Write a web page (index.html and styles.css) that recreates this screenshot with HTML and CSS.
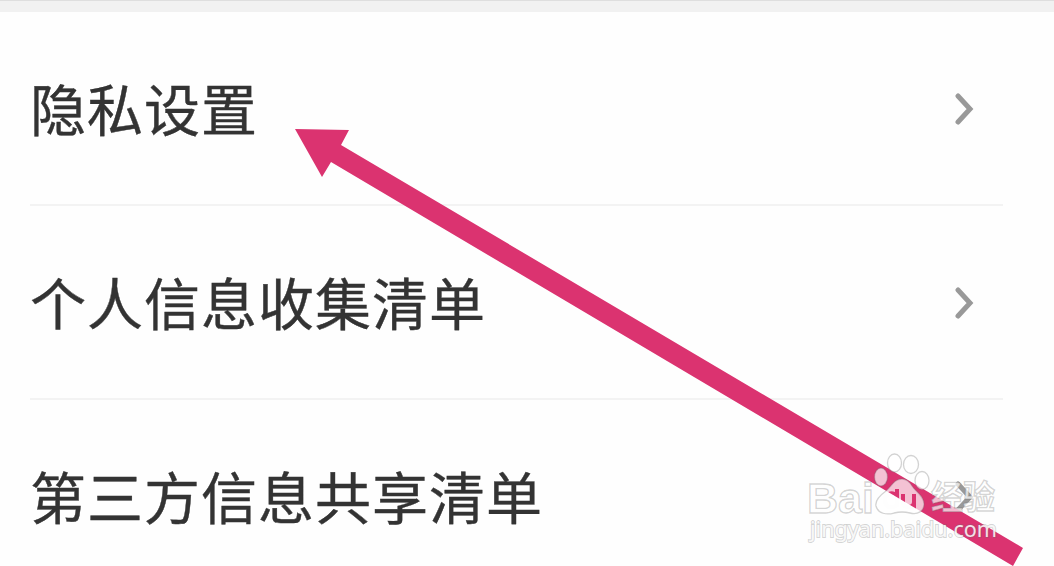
FILE: index.html
```html
<!DOCTYPE html>
<html lang="zh-CN">
<head>
    <meta charset="UTF-8">
    <meta name="viewport" content="width=device-width, initial-scale=1.0">
    <title>隐私设置</title>
    <link rel="stylesheet" href="styles.css">
</head>
<body>
    <div class="page">
        <div class="top-band"></div>
        <ul class="settings">
            <li class="row">
                <span class="label">隐私设置</span>
                <svg class="chevron" width="20" height="34" viewBox="0 0 20 34"><path d="M4 5L16 18L4 31"/></svg>
            </li>
            <li class="row">
                <span class="label">个人信息收集清单</span>
                <svg class="chevron" width="20" height="34" viewBox="0 0 20 34"><path d="M4 5L16 18L4 31"/></svg>
            </li>
            <li class="row">
                <span class="label">第三方信息共享清单</span>
                <svg class="chevron" width="20" height="34" viewBox="0 0 20 34"><path d="M4 5L16 18L4 31"/></svg>
            </li>
        </ul>

        <!-- arrow and watermark lie over the list -->
        <svg class="overlay" width="1054" height="566" viewBox="0 0 1054 566">
            <defs>
                <mask id="du-cut" maskUnits="userSpaceOnUse" x="860" y="440" width="80" height="90">
                    <rect x="860" y="440" width="80" height="90" fill="#fff"/>
                    <path class="du-shape" d="M897 489V507M897 496C895 492 885 492 885 500C885 509 895 509 897 504M903 494V502Q903 507 908 507Q914 507 914 502V494M914 494V509"/>
                </mask>
            </defs>
            <polygon class="arrow" points="295,129 349,130 341,145 1023,548 1013,566 331,162 322,177"/>
            <g class="watermark">
                <text class="brand" x="807" y="513" textLength="67" lengthAdjust="spacingAndGlyphs">Bai</text>
                <ellipse cx="881" cy="477" rx="6.500" ry="9"/>
                <ellipse cx="894.500" cy="463" rx="7" ry="9"/>
                <ellipse cx="911" cy="464.500" rx="7.500" ry="9"/>
                <ellipse cx="922" cy="480.500" rx="7" ry="9"/>
                <path mask="url(#du-cut)" d="M902 479C894 479 892 486 886 491C879 496 875 501 876 506C878 514 887 515 894 513Q902 511 910 513C918 515 924 511 924 504C924 496 916 492 912 486Q908 479 902 479Z"/>
                <text class="brand-cn" x="931" y="509" textLength="64" lengthAdjust="spacingAndGlyphs">经验</text>
                <text class="site" x="810" y="537" textLength="187" lengthAdjust="spacingAndGlyphs">jingyan.baidu.com</text>
            </g>
        </svg>
    </div>
</body>
</html>
```

FILE: styles.css
```css
body {
    margin: 0;
    background: #fefefe;
    color: #333;
    font-family: "Noto Sans CJK SC", sans-serif;
}

.page {
    position: relative;
    height: 566px;
    overflow: hidden;
}

.top-band {
    height: 12px;
    box-sizing: border-box;
    background: #f1f1f1;
    border-top: 1px solid #dedede;
}

.settings {
    list-style: none;
    margin: 0;
    padding: 0 51px 0 30px;
}

.row {
    display: flex;
    align-items: center;
    justify-content: space-between;
    box-sizing: border-box;
    height: 194px;
    padding-right: 29px;
    border-bottom: 2px solid #f3f3f3;
}

.label {
    padding-bottom: 2px;
    font-size: 56px;
    line-height: 80px;
    letter-spacing: 1px;
    -webkit-text-stroke: 0.4px #333;
}

.chevron path {
    fill: none;
    stroke: #999;
    stroke-width: 5;
    stroke-linecap: round;
}

.overlay {
    position: absolute;
    left: 0;
    top: 0;
}

.arrow {
    fill: #db3370;
}

.watermark {
    fill: rgba(255, 255, 255, 0.7);
    stroke: rgba(110, 110, 110, 0.3);
    stroke-width: 1.3;
}

.brand {
    font: bold 43px "Liberation Sans", sans-serif;
}

.brand-cn {
    font: bold 33px "Noto Sans CJK SC", sans-serif;
}

.site {
    font: 22px "Noto Sans", sans-serif;
    fill: rgba(255, 255, 255, 0.85);
    stroke-width: 1.8;
    paint-order: stroke;
}

.du-shape {
    fill: none;
    stroke: #000;
    stroke-width: 4;
}
```
